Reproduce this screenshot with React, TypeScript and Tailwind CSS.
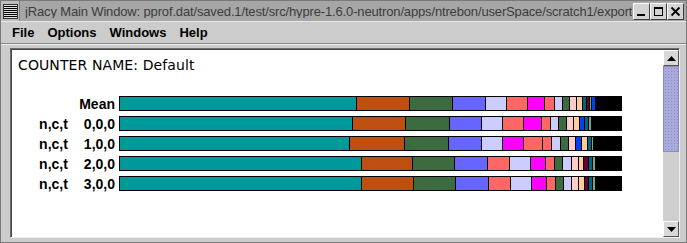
import React from "react";

const SEG_COLORS: Record<string, string> = {
  T: "bg-[#009999]",
  O: "bg-[#bf4f10]",
  G: "bg-[#3d6b40]",
  B: "bg-[#6666ff]",
  L: "bg-[#ccccff]",
  S: "bg-[#ff6666]",
  M: "bg-[#ff00ff]",
  P: "bg-[#ffcccc]",
  E: "bg-[#ffcc99]",
  U: "bg-[#0040f0]",
  D: "bg-[#006680]",
  R: "bg-[#660033]",
  Q: "bg-[#66aa88]",
  K: "bg-black",
};

const BAR_END = 622;

// [startX, colorKey] pairs, each segment runs to the next start
const ROWS: { a: string; b: string; segs: [number, string][] }[] = [
  {
    a: "",
    b: "Mean",
    segs: [
      [120, "T"], [357, "O"], [410, "G"], [453, "B"], [486, "L"], [507, "S"], [528, "M"], [545, "S"],
      [555, "L"], [563, "G"], [570, "P"], [577, "E"], [583, "D"], [587, "R"], [590, "Q"], [592, "U"], [596, "K"],
    ],
  },
  {
    a: "n,c,t",
    b: "0,0,0",
    segs: [
      [120, "T"], [353, "O"], [406, "G"], [450, "B"], [482, "L"], [503, "S"], [524, "M"], [542, "S"],
      [551, "L"], [559, "G"], [567, "P"], [574, "E"], [580, "U"], [585, "D"], [589, "Q"], [592, "K"],
    ],
  },
  {
    a: "n,c,t",
    b: "1,0,0",
    segs: [
      [120, "T"], [350, "O"], [405, "G"], [449, "B"], [482, "L"], [503, "M"], [524, "S"], [543, "S"],
      [552, "L"], [561, "G"], [569, "P"], [576, "U"], [582, "E"], [588, "D"], [592, "Q"], [594, "K"],
    ],
  },
  {
    a: "n,c,t",
    b: "2,0,0",
    segs: [
      [120, "T"], [362, "O"], [413, "G"], [455, "B"], [488, "S"], [510, "L"], [531, "M"], [546, "S"],
      [555, "G"], [563, "L"], [572, "P"], [579, "E"], [584, "R"], [589, "D"], [593, "Q"], [596, "K"],
    ],
  },
  {
    a: "n,c,t",
    b: "3,0,0",
    segs: [
      [120, "T"], [362, "O"], [414, "G"], [456, "B"], [489, "S"], [511, "L"], [532, "M"], [547, "S"],
      [556, "G"], [564, "L"], [572, "P"], [579, "E"], [585, "R"], [589, "D"], [593, "Q"], [596, "K"],
    ],
  },
];

function Bar({ segs }: { segs: [number, string][] }) {
  return (
    <div className="flex h-[15px] border border-black border-l-0 bg-black">
      {segs.map(([x, c], i) => {
        const next = i + 1 < segs.length ? segs[i + 1][0] : BAR_END;
        return (
          <div
            key={i}
            className={`h-full border-l border-black ${SEG_COLORS[c]}`}
            style={{ width: next - x }}
          />
        );
      })}
    </div>
  );
}

function TitleButton({ kind }: { kind: "min" | "max" | "close" }) {
  return (
    <div className="w-[17px] h-[17px] bg-[#d4d4d4] border border-t-white border-l-white border-r-[#404040] border-b-[#404040] flex items-center justify-center">
      <svg width="11" height="11" viewBox="0 0 11 11">
        {kind === "min" && <rect x="1" y="8" width="8" height="2" fill="#000" />}
        {kind === "max" && <rect x="1.5" y="1.5" width="8" height="8" fill="none" stroke="#000" strokeWidth="1" />}
        {kind === "max" && <rect x="1" y="1" width="9" height="2" fill="#000" />}
        {kind === "close" && <path d="M1.5 1.5 L9.5 9.5 M9.5 1.5 L1.5 9.5" stroke="#000" strokeWidth="1.8" />}
      </svg>
    </div>
  );
}

export default function App() {
  return (
    <div className="w-[687px] h-[243px] bg-[#7a7a7a] p-[1px] overflow-hidden font-['Liberation_Sans',Arial,sans-serif]">
      {/* title bar */}
      <div className="h-[20px] bg-[#a6a6a6] flex items-center">
        <div className="w-[19px] h-[20px] flex items-center justify-center border-r border-[#808080] bg-[#bdbdbd]">
          <svg width="15" height="15" viewBox="0 0 15 15">
            <rect x="0.5" y="0.5" width="14" height="14" fill="#e0e0e0" stroke="#333" />
            {[2.5, 4.5, 6.5, 8.5, 10.5, 12.5].map((y) => (
              <line key={y} x1="1" y1={y} x2="14" y2={y} stroke="#000" strokeWidth="1" />
            ))}
          </svg>
        </div>
        <div className="flex-1 min-w-0 overflow-hidden whitespace-nowrap pl-[5px] text-[13px] tracking-[-0.15px] text-[#3c3c3c] leading-none">
          jRacy Main Window: pprof.dat/saved.1/test/src/hypre-1.6.0-neutron/apps/ntrebon/userSpace/scratch1/export
        </div>
        <div className="flex pr-[2px] pl-[1px] bg-[#a6a6a6]">
          <TitleButton kind="min" />
          <TitleButton kind="max" />
          <TitleButton kind="close" />
        </div>
      </div>

      {/* window body */}
      <div className="h-[221px] bg-[#cccccc] border-t border-[#e8e8e8] flex flex-col">
        {/* menu bar */}
        <div className="h-[22px] flex items-center gap-[13px] pl-[11px] pt-[1px] text-[13px] font-bold text-black border-b border-[#888] shadow-[0_1px_0_#eee]">
          <span>File</span>
          <span>Options</span>
          <span>Windows</span>
          <span>Help</span>
        </div>

        {/* scroll pane */}
        <div className="flex-1 pt-[4px] pl-[9px] pr-[6px] pb-[4px]">
          <div className="h-full flex border border-[#6e6e6e] border-r-[#f0f0f0] border-b-[#f0f0f0]">
            <div className="flex-1 bg-white border-t border-l border-[#444] pt-[7px]">
              <div className="pl-[6px] text-[14px] text-black leading-[16px] font-['DejaVu_Sans',sans-serif] tracking-[0.1px]">
                COUNTER NAME: Default
              </div>
              <div className="mt-[23px] flex flex-col gap-[5px]">
                {ROWS.map((r, i) => (
                  <div key={i} className="flex items-center h-[15px]">
                    <div className="w-[103px] flex justify-end text-[14px] font-bold text-black leading-none">
                      {r.a && <span className="mr-[16px]">{r.a}</span>}
                      <span>{r.b}</span>
                    </div>
                    <div className="ml-[4px]">
                      <Bar segs={r.segs} />
                    </div>
                  </div>
                ))}
              </div>
            </div>

            {/* scrollbar */}
            <div className="w-[16px] bg-[#cfcfcf] flex flex-col border-t border-[#444]">
              <div className="h-[16px] bg-[#d8d8d8] border border-t-white border-l-white border-r-[#555] border-b-[#555] flex items-center justify-center">
                <svg width="9" height="5" viewBox="0 0 9 5">
                  <path d="M0 5 L4.5 0 L9 5 Z" fill="#000" />
                </svg>
              </div>
              <div className="h-[86px] bg-[#aaaadd] bg-[radial-gradient(#8c8cc6_0.8px,transparent_0.9px)] bg-[length:3px_3px] border border-[#8a8ac0]" />
              <div className="flex-1" />
              <div className="h-[16px] bg-[#d8d8d8] border border-t-white border-l-white border-r-[#555] border-b-[#555] flex items-center justify-center">
                <svg width="9" height="5" viewBox="0 0 9 5">
                  <path d="M0 0 L9 0 L4.5 5 Z" fill="#000" />
                </svg>
              </div>
            </div>
          </div>
        </div>
      </div>
    </div>
  );
}
